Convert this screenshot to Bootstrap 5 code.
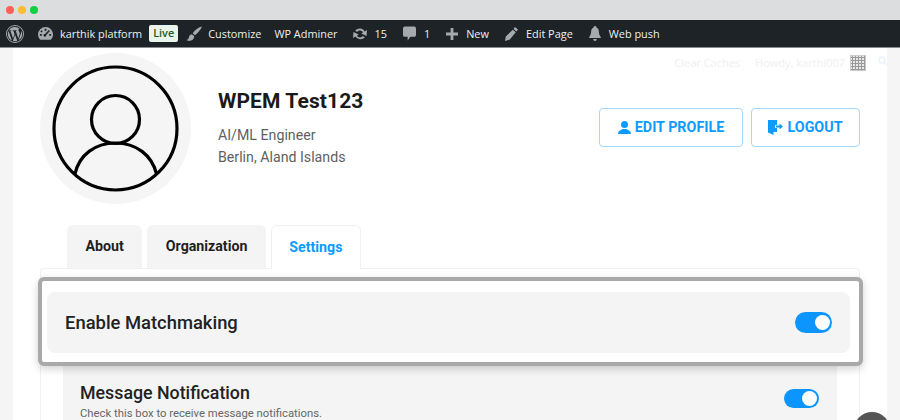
<!DOCTYPE html>
<html lang="en"><head><meta charset="utf-8"><title>Profile</title>
<link href="https://cdn.jsdelivr.net/npm/bootstrap@5.3.0/dist/css/bootstrap.min.css" rel="stylesheet">
<style>
html,body{height:420px;overflow:hidden;background:#fff}
body{font-family:Roboto,sans-serif;color:#1a1a1a}
.chrome-bar{height:20px;background:#dcdddf;padding-left:6px;gap:4px}
.dot-light{width:8px;height:8px;border-radius:50%}
.dot-r{background:#ff5f57}.dot-y{background:#febc2e}.dot-g{background:#11cf45}
.admin-bar{height:28px;background:#1d2327;border-bottom:1px solid #8a8d90;font:10.9px/27px "Open Sans",sans-serif;color:#eef0f1;padding-left:6px;white-space:nowrap}
.admin-bar svg{fill:#a7aaad;display:block;flex:none}
.bar-group{display:flex;align-items:center}
.ml7{margin-left:7px}.ml8{margin-left:8px}.ml13{margin-left:13px}.ml14{margin-left:14px}.ml15{margin-left:15px}.ml16{margin-left:16px}
.g6{gap:6px}.g7{gap:7px}.g8{gap:8px}
.live-tag{background:#e9f5ea;color:#1d5c2a;border-radius:2px;font-weight:600;line-height:16px;height:17px;width:29px;text-align:center}
.page-shell{height:372px;background:#f5f5f5;padding:0 13px;overflow:hidden}
.page-inner{height:372px;background:#fff;position:relative}
.ghost-links{height:0;padding-right:21px;font:11px/30px "Open Sans",sans-serif;color:#eef0f2;gap:15px}
.ghost-howdy{height:28px;gap:5px}
.ghost-avatar{width:16px;height:16px;margin-top:7px;background:#e8e8e8 radial-gradient(circle,#999 0 1px,transparent 1.300px) 0 0/3px 3px;border:1px solid #ccc}
.ghost-search{position:absolute;right:-1px;top:8px;fill:none;stroke:#eaf3fa;stroke-width:1.500}
.avatar-disc{width:151px;height:151px;border-radius:50%;background:#f5f5f5;flex:none}
.profile-row{padding:5px 27px 0 27px}
.profile-name{font-size:21px;font-weight:700;line-height:25px;margin:0 0 10px;letter-spacing:.1px}
.profile-meta{font-size:14.2px;line-height:22px;color:#5f5f5f}
.profile-text{margin-left:27px;padding-top:36px;height:151px}
.btn-wrap{padding-top:55px}
.blue-btn{height:39px;border:1px solid #a5d8fc;border-radius:4px;color:#0d9bff;font-size:14.3px;font-weight:700;background:#fff;gap:4px;padding:0}
.blue-btn:hover{color:#0d9bff;border-color:#a5d8fc}
.edit-btn{width:144px}.out-btn{width:109px}
.tab-row{margin:21px 0 0 54px;gap:5px;height:43px;position:relative;z-index:1}
.tab-item{background:#f4f4f4;border-radius:6px 6px 0 0;font-size:14.200px;font-weight:700;color:#1f1f1f;height:43px;padding:0 18.500px;line-height:42px}
.tab-on{background:#fff;color:#0d9bff;border:1px solid #f0f0f0;border-bottom:0;height:44px;padding:0 17.500px}
.tab-panel{margin:0 27px;height:200px;border:1px solid #f0f0f0;border-radius:4px 4px 0 0;padding:97px 22px 0;position:relative}
.spot-box{position:absolute;left:-3px;right:-4px;top:8px;height:89px;background:#fff;border:4px solid #a9a9a9;border-radius:6px;box-shadow:0 3px 8px rgba(0,0,0,.18);padding:11px 9px 0 5px;z-index:2}
.spot-row{height:61px;background:#f4f4f4;border-radius:8px;padding:0 18px 0 18px;font-size:18.400px;font-weight:500;color:#222}
.pill-switch{background:#0d95ff;border-radius:20px;position:relative;flex:none}
.pill-switch::after{content:"";position:absolute;background:#fff;border-radius:50%;right:2px}
.pill-big{width:37px;height:21px}.pill-big::after{width:15px;height:15px;top:3px}
.pill-small{width:35px;height:19px;margin-top:7px}.pill-small::after{width:15px;height:15px;top:2px}
.msg-row{background:#f4f4f4;height:104px;padding:16px 18px 0 17px}
.msg-title{font-size:17.800px;font-weight:500;line-height:21px;color:#222}
.msg-note{font-size:11.300px;line-height:14px;color:#666;margin-top:4px}
.fab-round{position:absolute;right:-3px;top:364px;width:36px;height:36px;border-radius:50%;background:#555;z-index:3}
</style></head><body>
<div class="chrome-bar d-flex align-items-center">
<span class="dot-light dot-r"></span><span class="dot-light dot-y"></span><span class="dot-light dot-g"></span>
</div>
<div class="admin-bar d-flex align-items-center">
<svg width="18" height="18" viewBox="0 0 20 20"><path fill-rule="evenodd" d="M10 0a10 10 0 1 0 0 20A10 10 0 0 0 10 0zm0 1a9 9 0 1 1 0 18 9 9 0 0 1 0-18z"/><path d="M2 10c0 3.2 1.900 5.900 4.600 7.200L2.800 6.700A8 8 0 0 0 2 10zm13.300-.400c0-1-.4-1.700-.7-2.200-.4-.7-.8-1.200-.8-1.900 0-.7.600-1.400 1.300-1.400h.1A8 8 0 0 0 3.100 6h.5c.8 0 2.100-.1 2.100-.1.400 0 .5.600.1.600l-.9.100 2.900 8.500 1.700-5.200L8.300 6.600l-.8-.1c-.4 0-.4-.7 0-.6 0 0 1.300.1 2.100.1s2.100-.1 2.100-.1c.4 0 .5.600.1.600l-.9.100 2.800 8.400.8-2.700c.4-1 .7-1.800.7-2.700zm-5.200 1.100-2.400 6.900a8 8 0 0 0 4.900-.1l-.1-.1-2.400-6.700zm6.800-4.500c0 .3.100.6.100.9 0 .8-.2 1.800-.6 2.900l-2.500 7A8 8 0 0 0 18 10a7.900 7.900 0 0 0-1.100-3.800z"/></svg>
<div class="bar-group g7 ml14"><svg width="15" height="13" viewBox="0 0 16 14"><path fill-rule="evenodd" d="M8 0a8 8 0 0 0-8 8c0 2.300 1 4.400 2.500 5.800h11A8 8 0 0 0 8 0zM7 2h2v2H7zM3.500 3.500l1.500 1-1 1.500-1.500-1zM2 7.500h2v2H2zm10 0h2v2h-2zm-.5-4.300 1.300 1.200-4 4.300a1.500 1.500 0 1 1-1.300-1.200z"/></svg><span>karthik platform</span></div>
<span class="live-tag ml7">Live</span>
<div class="bar-group g6 ml8"><svg width="16" height="16" viewBox="0 0 16 16"><path d="M16 .5C13 1.200 9 3.800 6.700 7.200l2.300 2C12 6.800 15 3.500 16 .5zM5.800 8.200C3.800 8.400 3 10 2.800 11.700 2.700 13 1.500 13.700.5 14c2 1.500 5.500 1 7-1.200.7-1.100.8-2 .6-2.700z"/></svg><span>Customize</span></div>
<span class="ml13">WP Adminer</span>
<div class="bar-group g6 ml15"><svg width="16" height="14" viewBox="0 0 20 18"><path d="M10 2c2.600 0 4.900 1.500 6 3.800L19 4l-.6 7.500-6.700-3.300 2.300-1.400A5 5 0 0 0 10 4.500 5 5 0 0 0 6.200 6.300L3.800 4.600A8 8 0 0 1 10 2zM1 14l.6-7.500 6.700 3.300L6 11.200a5 5 0 0 0 4 2.300c1.500 0 2.900-.7 3.800-1.800l2.400 1.700A8 8 0 0 1 4 12.200z"/></svg><span>15</span></div>
<div class="bar-group g8 ml16"><svg width="13" height="15" viewBox="0 0 14 15"><path d="M2 0h10a2 2 0 0 1 2 2v7a2 2 0 0 1-2 2H8l-3 4v-4H2a2 2 0 0 1-2-2V2a2 2 0 0 1 2-2z"/></svg><span>1</span></div>
<div class="bar-group g8 ml16"><svg width="12" height="12" viewBox="0 0 13 13"><path d="M5 0h3v5h5v3H8v5H5V8H0V5h5z"/></svg><span>New</span></div>
<div class="bar-group g8 ml16"><svg width="13" height="14" viewBox="0 0 13 14"><path d="M10 0l3 2.500-1.500 2-3-2.500zM7.800 2.700l3 2.500-6 7.400L0 14l.8-4.600z"/></svg><span>Edit Page</span></div>
<div class="bar-group g8 ml16"><svg width="12" height="15" viewBox="0 0 13 16"><path d="M6.500 0C8 0 8 1 8 1.500c2 .7 2.700 2.500 2.700 4.500 0 3.500 2.300 5.500 2.300 7H0c0-1.500 2.300-3.500 2.300-7 0-2 .7-3.800 2.700-4.500C5 1 5 0 6.500 0zM4.500 14h4a2 2 0 0 1-4 0z"/></svg><span>Web push</span></div>
</div>
<div class="page-shell"><div class="page-inner">
<div class="ghost-links d-flex justify-content-end"><span>Clear Caches</span><span class="ghost-howdy d-flex align-items-start">Howdy, karthi007 <span class="ghost-avatar"></span></span></div>
<svg class="ghost-search" width="10" height="10" viewBox="0 0 10 10"><circle cx="4" cy="4" r="3"/><path d="M6 6l3 3"/></svg>
<div class="profile-row d-flex">
<div class="avatar-disc d-flex align-items-center justify-content-center">
<svg width="127" height="127" viewBox="0 0 127 127" fill="none" stroke="#000" stroke-width="3.200"><circle cx="63.500" cy="63.500" r="61.500"/><circle cx="63.500" cy="54.500" r="24"/><path d="M23 109C27 90 43 78 63.500 78S100 90 104.500 109"/></svg>
</div>
<div class="profile-text"><h1 class="profile-name">WPEM Test123</h1><div class="profile-meta">AI/ML Engineer<br>Berlin, Aland Islands</div></div>
<div class="ms-auto d-flex gap-2 align-items-start btn-wrap">
<a href="#" class="btn blue-btn edit-btn d-inline-flex align-items-center justify-content-center"><svg width="13" height="13" viewBox="0 0 13 13" fill="#0d9bff"><circle cx="6.500" cy="3.500" r="3.500"/><path d="M0 13c0-3 3-4 4.500-5h4C10 9 13 10 13 13z"/></svg> EDIT PROFILE</a>
<a href="#" class="btn blue-btn out-btn d-inline-flex align-items-center justify-content-center"><svg width="15" height="15" viewBox="0 0 15 15" fill="#0d9bff"><path d="M0 0h9v5H7v3h2v4H5.500v3L0 12.500z"/><path d="M8 5.500h3.500V3.500L15 6.500l-3.500 3V7.500H8z"/></svg> LOGOUT</a>
</div>
</div>
<div class="tab-row d-flex"><div class="tab-item">About</div><div class="tab-item">Organization</div><div class="tab-item tab-on">Settings</div></div>
<div class="tab-panel">
<div class="spot-box"><div class="spot-row d-flex align-items-center justify-content-between"><span>Enable Matchmaking</span><span class="pill-switch pill-big"></span></div></div>
<div class="msg-row d-flex justify-content-between"><div><div class="msg-title">Message Notification</div><div class="msg-note">Check this box to receive message notifications.</div></div><span class="pill-switch pill-small"></span></div>
</div>
<div class="fab-round"></div>
</div></div>
<script src="https://cdn.jsdelivr.net/npm/bootstrap@5.3.0/dist/js/bootstrap.bundle.min.js"></script>
</body></html>
